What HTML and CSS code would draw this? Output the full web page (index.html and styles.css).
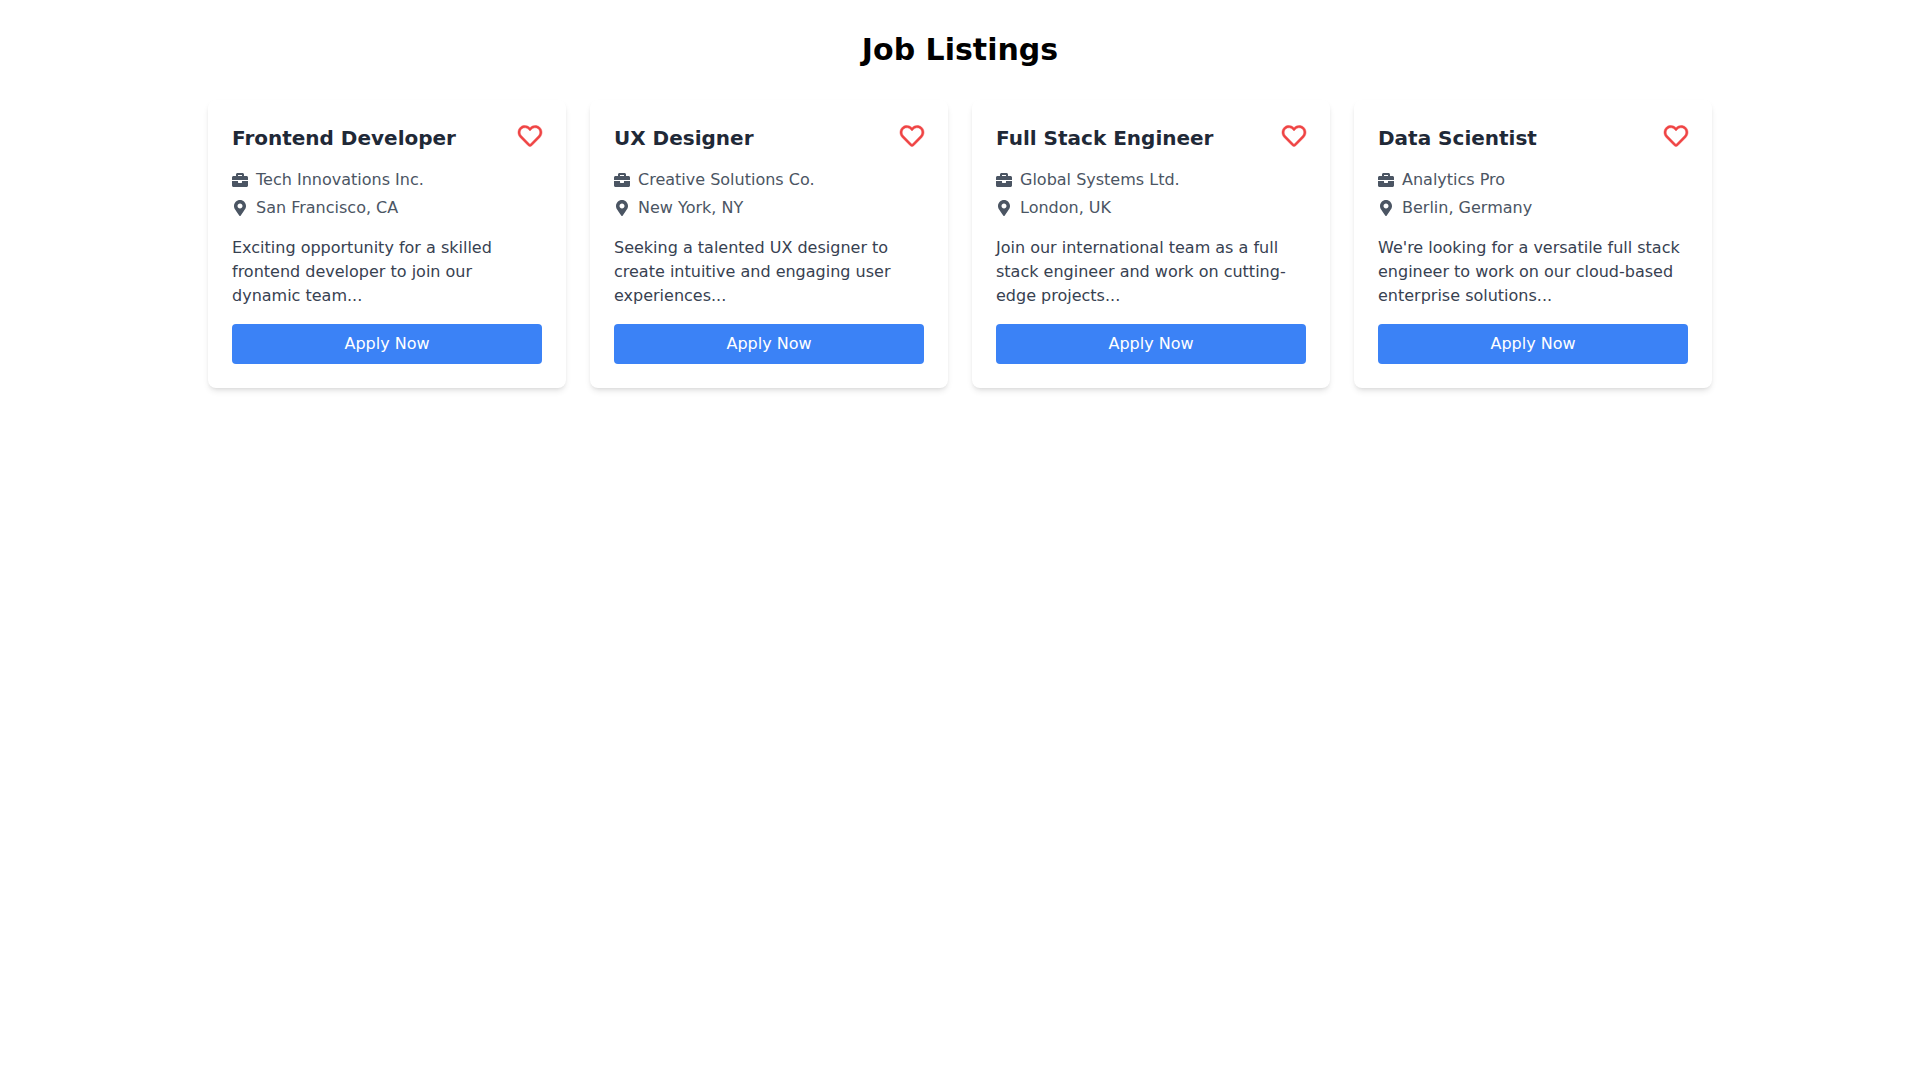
FILE: index.html
```html
<!DOCTYPE html>
<html lang="en">
<head>
<meta charset="utf-8">
<title>Job Listings</title>
<link rel="stylesheet" href="styles.css">
</head>
<body>
<main class="page">
  <h1 class="page-title">Job Listings</h1>
  <div class="grid">
    <article class="card">
      <div class="card-head"><h2 class="job-title">Frontend Developer</h2><svg class="heart" viewBox="0 0 512 512"><path d="M458.4 64.3C400.6 15.7 311.3 23 256 78.7 200.7 23 111.4 15.6 53.6 64.3-21.6 127.6-10.6 230.8 43 285.5l175.4 178.7c10 10.2 23.3 15.9 37.6 15.9 14.4 0 27.6-5.6 37.6-15.8L469 285.6c53.5-54.7 64.7-157.9-10.6-221.3zm-23.6 187.5L259.4 430.5c-2.4 2.4-4.4 2.4-6.8 0L77.2 251.8c-36.5-37.2-43.9-107.6 7.3-150.7 38.9-32.7 98.9-27.8 136.5 10.5l35 35.7 35-35.7c37.8-38.5 97.8-43.2 136.5-10.6 51.1 43.1 43.5 113.9 7.3 150.8z"/></svg></div>
      <div class="meta"><svg class="icon" viewBox="0 0 512 512"><path d="M320 336c0 8.84-7.16 16-16 16h-96c-8.84 0-16-7.16-16-16v-48H0v144c0 25.6 22.4 48 48 48h416c25.6 0 48-22.4 48-48V288H320v48zm144-208h-80V80c0-25.6-22.4-48-48-48H176c-25.6 0-48 22.4-48 48v48H48c-25.6 0-48 22.4-48 48v80h512v-80c0-25.6-22.4-48-48-48zm-144 0H192V96h128v32z"/></svg><span>Tech Innovations Inc.</span></div>
      <div class="meta"><svg class="icon" viewBox="0 0 384 512"><path d="M172.268 501.67C26.97 291.031 0 269.413 0 192 0 85.961 85.961 0 192 0s192 85.961 192 192c0 77.413-26.97 99.031-172.268 309.67-9.535 13.774-29.93 13.773-39.464 0zM192 272c44.183 0 80-35.817 80-80s-35.817-80-80-80-80 35.817-80 80 35.817 80 80 80z"/></svg><span>San Francisco, CA</span></div>
      <p class="desc">Exciting opportunity for a skilled frontend developer to join our dynamic team...</p>
      <button class="apply">Apply Now</button>
    </article>
    <article class="card">
      <div class="card-head"><h2 class="job-title">UX Designer</h2><svg class="heart" viewBox="0 0 512 512"><path d="M458.4 64.3C400.6 15.7 311.3 23 256 78.7 200.7 23 111.4 15.6 53.6 64.3-21.6 127.6-10.6 230.8 43 285.5l175.4 178.7c10 10.2 23.3 15.9 37.6 15.9 14.4 0 27.6-5.6 37.6-15.8L469 285.6c53.5-54.7 64.7-157.9-10.6-221.3zm-23.6 187.5L259.4 430.5c-2.4 2.4-4.4 2.4-6.8 0L77.2 251.8c-36.5-37.2-43.9-107.6 7.3-150.7 38.9-32.7 98.9-27.8 136.5 10.5l35 35.7 35-35.7c37.8-38.5 97.8-43.2 136.5-10.6 51.1 43.1 43.5 113.9 7.3 150.8z"/></svg></div>
      <div class="meta"><svg class="icon" viewBox="0 0 512 512"><path d="M320 336c0 8.84-7.16 16-16 16h-96c-8.84 0-16-7.16-16-16v-48H0v144c0 25.6 22.4 48 48 48h416c25.6 0 48-22.4 48-48V288H320v48zm144-208h-80V80c0-25.6-22.4-48-48-48H176c-25.6 0-48 22.4-48 48v48H48c-25.6 0-48 22.4-48 48v80h512v-80c0-25.6-22.4-48-48-48zm-144 0H192V96h128v32z"/></svg><span>Creative Solutions Co.</span></div>
      <div class="meta"><svg class="icon" viewBox="0 0 384 512"><path d="M172.268 501.67C26.97 291.031 0 269.413 0 192 0 85.961 85.961 0 192 0s192 85.961 192 192c0 77.413-26.97 99.031-172.268 309.67-9.535 13.774-29.93 13.773-39.464 0zM192 272c44.183 0 80-35.817 80-80s-35.817-80-80-80-80 35.817-80 80 35.817 80 80 80z"/></svg><span>New York, NY</span></div>
      <p class="desc">Seeking a talented UX designer to create intuitive and engaging user experiences...</p>
      <button class="apply">Apply Now</button>
    </article>
    <article class="card">
      <div class="card-head"><h2 class="job-title">Full Stack Engineer</h2><svg class="heart" viewBox="0 0 512 512"><path d="M458.4 64.3C400.6 15.7 311.3 23 256 78.7 200.7 23 111.4 15.6 53.6 64.3-21.6 127.6-10.6 230.8 43 285.5l175.4 178.7c10 10.2 23.3 15.9 37.6 15.9 14.4 0 27.6-5.6 37.6-15.8L469 285.6c53.5-54.7 64.7-157.9-10.6-221.3zm-23.6 187.5L259.4 430.5c-2.4 2.4-4.4 2.4-6.8 0L77.2 251.8c-36.5-37.2-43.9-107.6 7.3-150.7 38.9-32.7 98.9-27.8 136.5 10.5l35 35.7 35-35.7c37.8-38.5 97.8-43.2 136.5-10.6 51.1 43.1 43.5 113.9 7.3 150.8z"/></svg></div>
      <div class="meta"><svg class="icon" viewBox="0 0 512 512"><path d="M320 336c0 8.84-7.16 16-16 16h-96c-8.84 0-16-7.16-16-16v-48H0v144c0 25.6 22.4 48 48 48h416c25.6 0 48-22.4 48-48V288H320v48zm144-208h-80V80c0-25.6-22.4-48-48-48H176c-25.6 0-48 22.4-48 48v48H48c-25.6 0-48 22.4-48 48v80h512v-80c0-25.6-22.4-48-48-48zm-144 0H192V96h128v32z"/></svg><span>Global Systems Ltd.</span></div>
      <div class="meta"><svg class="icon" viewBox="0 0 384 512"><path d="M172.268 501.67C26.97 291.031 0 269.413 0 192 0 85.961 85.961 0 192 0s192 85.961 192 192c0 77.413-26.97 99.031-172.268 309.67-9.535 13.774-29.93 13.773-39.464 0zM192 272c44.183 0 80-35.817 80-80s-35.817-80-80-80-80 35.817-80 80 35.817 80 80 80z"/></svg><span>London, UK</span></div>
      <p class="desc">Join our international team as a full stack engineer and work on cutting-edge projects...</p>
      <button class="apply">Apply Now</button>
    </article>
    <article class="card">
      <div class="card-head"><h2 class="job-title">Data Scientist</h2><svg class="heart" viewBox="0 0 512 512"><path d="M458.4 64.3C400.6 15.7 311.3 23 256 78.7 200.7 23 111.4 15.6 53.6 64.3-21.6 127.6-10.6 230.8 43 285.5l175.4 178.7c10 10.2 23.3 15.9 37.6 15.9 14.4 0 27.6-5.6 37.6-15.8L469 285.6c53.5-54.7 64.7-157.9-10.6-221.3zm-23.6 187.5L259.4 430.5c-2.4 2.4-4.4 2.4-6.8 0L77.2 251.8c-36.5-37.2-43.9-107.6 7.3-150.7 38.9-32.7 98.9-27.8 136.5 10.5l35 35.7 35-35.7c37.8-38.5 97.8-43.2 136.5-10.6 51.1 43.1 43.5 113.9 7.3 150.8z"/></svg></div>
      <div class="meta"><svg class="icon" viewBox="0 0 512 512"><path d="M320 336c0 8.84-7.16 16-16 16h-96c-8.84 0-16-7.16-16-16v-48H0v144c0 25.6 22.4 48 48 48h416c25.6 0 48-22.4 48-48V288H320v48zm144-208h-80V80c0-25.6-22.4-48-48-48H176c-25.6 0-48 22.4-48 48v48H48c-25.6 0-48 22.4-48 48v80h512v-80c0-25.6-22.4-48-48-48zm-144 0H192V96h128v32z"/></svg><span>Analytics Pro</span></div>
      <div class="meta"><svg class="icon" viewBox="0 0 384 512"><path d="M172.268 501.67C26.97 291.031 0 269.413 0 192 0 85.961 85.961 0 192 0s192 85.961 192 192c0 77.413-26.97 99.031-172.268 309.67-9.535 13.774-29.93 13.773-39.464 0zM192 272c44.183 0 80-35.817 80-80s-35.817-80-80-80-80 35.817-80 80 35.817 80 80 80z"/></svg><span>Berlin, Germany</span></div>
      <p class="desc">We're looking for a versatile full stack engineer to work on our cloud-based enterprise solutions...</p>
      <button class="apply">Apply Now</button>
    </article>
  </div>
</main>
</body>
</html>
```
FILE: styles.css
```css
* { box-sizing: border-box; }
html, body { margin: 0; padding: 0; }
body { background: #fff; font-family: "DejaVu Sans", sans-serif; font-size: 16px; line-height: 24px; color: #000; }
.page { width: 1536px; margin: 0 auto; padding: 32px 16px; }
.page-title { margin: 0 0 32px; font-size: 30px; line-height: 36px; font-weight: 700; text-align: center; }
.grid { display: grid; grid-template-columns: repeat(4, 1fr); gap: 24px; }
.card { background: #fff; border-radius: 8px; padding: 24px; box-shadow: 0 4px 6px -1px rgba(0,0,0,.1), 0 2px 4px -2px rgba(0,0,0,.1); }
.card-head { display: flex; justify-content: space-between; align-items: flex-start; margin-bottom: 16px; }
.job-title { margin: 0; font-size: 20px; line-height: 28px; font-weight: 700; color: #1f2937; }
.heart { width: 24px; height: 24px; fill: #ef4444; stroke: #ef4444; stroke-width: 10; flex: none; overflow: visible; }
.meta { display: flex; align-items: center; color: #4b5563; margin-bottom: 4px; }
.icon { width: 16px; height: 16px; margin-right: 8px; fill: #4b5563; flex: none; }
.desc { margin: 16px 0 16px; color: #374151; }
.apply { display: block; width: 100%; height: 40px; padding: 8px 16px; border: 0; border-radius: 4px; background: #3b82f6; color: #fff; font: inherit; }
```
